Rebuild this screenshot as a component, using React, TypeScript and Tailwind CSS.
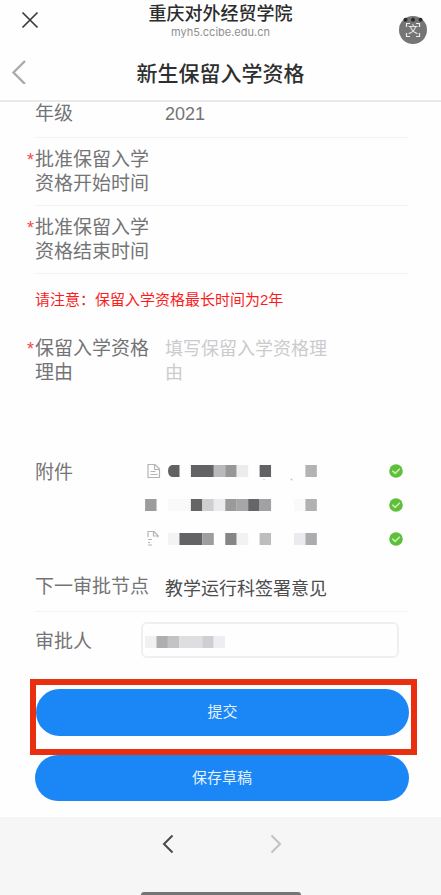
import { ReactNode } from "react";

interface ICell {
  at: number;
  span?: number;
  color: string;
}

interface IFileItem {
  name: string;
  icon: "full" | "partial" | "none";
  cells: ICell[];
}

interface IRowProps {
  label: ReactNode;
  htmlFor?: string;
  required?: boolean;
  className?: string;
  children?: ReactNode;
}

const CELL = 11.45;

const files: IFileItem[] = [
  {
    name: "file-1",
    icon: "full",
    cells: [
      { at: 2, span: 2, color: "#626264" },
      { at: 4, color: "#b9b9bb" },
      { at: 5, color: "#979797" },
      { at: 6, color: "#ececec" },
      { at: 8, color: "#626264" },
      { at: 12, color: "#b3b3b3" },
    ],
  },
  {
    name: "file-2",
    icon: "none",
    cells: [
      { at: -2, color: "#9c9c9c" },
      { at: 0, span: 2, color: "#f9f9f9" },
      { at: 2, color: "#656565" },
      { at: 3, color: "#cfcfd1" },
      { at: 4, color: "#ebebed" },
      { at: 5, color: "#9a9a9a" },
      { at: 6, color: "#a6a6a8" },
      { at: 7, color: "#666668" },
      { at: 8, color: "#a1a1a3" },
      { at: 11, color: "#f9f9f9" },
      { at: 12, color: "#b1b1b1" },
    ],
  },
  {
    name: "file-3",
    icon: "partial",
    cells: [
      { at: 0, color: "#f3f3f3" },
      { at: 1, span: 2, color: "#636365" },
      { at: 3, color: "#9d9d9f" },
      { at: 5, color: "#868686" },
      { at: 6, color: "#f2f2f2" },
      { at: 8, color: "#bdbdbd" },
      { at: 11, color: "#ebebef" },
      { at: 12, color: "#acacae" },
    ],
  },
];

const approverCells: ICell[] = [
  { at: 0, color: "#f1f1f3" },
  { at: 1, color: "#aeaeb0" },
  { at: 2, color: "#c3c3c5" },
  { at: 3, span: 2, color: "#dedee0" },
  { at: 5, color: "#cfcfd3" },
  { at: 6, color: "#eeeef2" },
];

const Cells = ({ cells, left }: { cells: ICell[]; left: number }) => (
  <>
    {cells.map((cell) => (
      <rect
        key={cell.at}
        x={left + cell.at * CELL}
        y="0"
        width={(cell.span ?? 1) * CELL}
        height="12"
        fill={cell.color}
      />
    ))}
  </>
);

const FileIcon = ({ partial }: { partial: boolean }) => (
  <g fill="none" stroke="#b4b4b6" strokeWidth="1.2">
    {partial ? (
      <path d="M4 4V-1.500H10l4 4v2M9.500-1v4h4M4 6.500h4M4 9.500h2M4 12h4" />
    ) : (
      <path d="M4-.5h7l4.500 4.500v8.500H4zM10.500-.5v5h5M6.500 6.500h5M6.500 9.500h7" />
    )}
  </g>
);

const CheckIcon = () => (
  <svg className="size-3.5" viewBox="0 0 14 14" fill="none">
    <circle cx="7" cy="7" r="6.8" fill="#5fbf3c" />
    <path
      d="M3.8 7.2l2.3 2.2 4.3-4.2"
      stroke="#c4f0a8"
      strokeWidth="1.6"
      strokeLinecap="round"
      strokeLinejoin="round"
    />
  </svg>
);

const Row = ({ label, htmlFor, required, className, children }: IRowProps) => (
  <div className={`flex pt-2.5 ${className ?? ""}`}>
    <label
      htmlFor={htmlFor}
      className="relative w-[130px] shrink-0 text-[19px] leading-6 text-[#747476]"
    >
      {required && (
        <span className="absolute -left-2 top-0 text-lg leading-6 text-[#f4494a]">
          *
        </span>
      )}
      {label}
    </label>
    {children}
  </div>
);

const App = () => {
  return (
    <div className="flex min-h-screen flex-col bg-[#fefefe] font-['Liberation_Sans','Noto_Sans_CJK_SC',sans-serif]">
      <header className="border-b-2 border-[#e9e9eb]">
        <div className="relative flex h-11 flex-col items-center pt-0.5">
          <button
            type="button"
            aria-label="关闭"
            className="absolute left-5 top-2.5 flex size-5 items-center justify-center"
          >
            <svg className="size-5" viewBox="0 0 20 20" fill="none">
              <path
                d="M2.500 2.500l15 15M17.500 2.500l-15 15"
                stroke="#3c3c3c"
                strokeWidth="1.7"
              />
            </svg>
          </button>
          <p className="text-lg leading-6 font-medium text-[#2c2c2c]">
            重庆对外经贸学院
          </p>
          <p className="font-['Inter'] text-[11px] leading-3 text-[#8f8f8f]">
            myh5.ccibe.edu.cn
          </p>
          <button
            type="button"
            aria-label="翻译"
            className="absolute right-3.5 top-4 flex size-7 items-center justify-center rounded-full bg-[#757575]"
          >
            <svg
              className="absolute inset-0 size-7"
              viewBox="0 0 28 28"
              fill="none"
            >
              <g fill="#2b2b2b">
                <circle cx="6.5" cy="3.7" r="2" />
                <circle cx="14" cy="3.7" r="2" />
                <circle cx="21.5" cy="3.7" r="2" />
              </g>
              <path
                d="M7.5 11V7.5H11M17 7.5h3.5V11M20.5 17v3.5H17M11 20.5H7.5V17"
                stroke="#ededed"
                strokeWidth="1.2"
              />
            </svg>
            <span className="text-[10px] leading-3 text-[#f4f4f4]">文</span>
          </button>
        </div>
        <div className="relative flex h-14 items-center justify-center pt-1">
          <button
            type="button"
            aria-label="返回"
            className="absolute left-2 top-4 flex h-6 w-5 items-center justify-center"
          >
            <svg className="h-6 w-5" viewBox="0 0 20 24" fill="none">
              <path
                d="M17 1L5.5 12.5 17 24"
                stroke="#ababad"
                strokeWidth="2.4"
              />
            </svg>
          </button>
          <h1 className="text-[21px] leading-6 font-medium text-[#2f2f2f]">
            新生保留入学资格
          </h1>
        </div>
      </header>

      <form onSubmit={(e) => e.preventDefault()}>
        <div className="pl-[35px] pr-8">
          <div className="flex border-b border-[#f3f3f5] pt-0.5 pb-[13px] text-[#747476]">
            <p className="w-[130px] text-[19px] leading-5">年级</p>
            <p className="text-lg leading-5">2021</p>
          </div>
          <Row
            required
            htmlFor="start"
            className="border-b border-[#f3f3f5] pb-[9px]"
            label={
              <>
                批准保留入学
                <br />
                资格开始时间
              </>
            }
          >
            <input
              id="start"
              className="min-w-0 flex-1 bg-transparent text-lg focus:outline-none"
            />
          </Row>
          <Row
            required
            htmlFor="end"
            className="border-b border-[#f3f3f5] pb-[9px]"
            label={
              <>
                批准保留入学
                <br />
                资格结束时间
              </>
            }
          >
            <input
              id="end"
              className="min-w-0 flex-1 bg-transparent text-lg focus:outline-none"
            />
          </Row>
          <p className="pt-4 pb-[17px] text-[15px] leading-5 text-[#fb1d1d]">
            请注意：保留入学资格最长时间为2年
          </p>
          <Row
            required
            htmlFor="reason"
            label={
              <>
                保留入学资格
                <br />
                理由
              </>
            }
          >
            <textarea
              id="reason"
              placeholder="填写保留入学资格理由"
              className="block h-28 w-44 resize-none text-lg leading-6 placeholder:text-[#cbcbcd] focus:outline-none"
            />
          </Row>
          <div className="flex pt-2.5 pb-3.5">
            <p className="w-[109px] pt-0.5 text-[19px] leading-6 text-[#747476]">
              附件
            </p>
            <ul className="flex flex-1 flex-col gap-2.5 pr-1.5">
              {files.map((file) => (
                <li
                  key={file.name}
                  className="flex h-6 items-center justify-between"
                >
                  <svg
                    className="h-3 w-44 overflow-visible"
                    viewBox="0 0 176 12"
                  >
                    {file.icon !== "none" && (
                      <FileIcon partial={file.icon === "partial"} />
                    )}
                    {file.icon === "full" && (
                      <path d="M35.5 0H28q-4 1-4 6t4 6h7.5z" fill="#626264" />
                    )}
                    <Cells cells={file.cells} left={24} />
                    {file.icon === "full" && (
                      <g fill="#c4c4c4">
                        <circle cx="120" cy="14.5" r="0.7" />
                        <circle cx="147.5" cy="14.5" r="1" />
                      </g>
                    )}
                  </svg>
                  <CheckIcon />
                </li>
              ))}
            </ul>
          </div>
          <div className="flex border-b border-[#f3f3f5] pt-2.5 pb-2.5">
            <p className="w-[130px] text-[19px] leading-6 text-[#747476]">
              下一审批节点
            </p>
            <p className="pt-0.5 text-lg leading-6 text-[#4c4c4e]">
              教学运行科签署意见
            </p>
          </div>
          <div className="flex items-center pt-2.5">
            <label
              htmlFor="approver"
              className="w-[106px] pt-1 text-[19px] leading-6 text-[#747476]"
            >
              审批人
            </label>
            <div className="relative mr-2.5 flex-1">
              <select
                id="approver"
                className="block h-9 w-full appearance-none rounded-md border-2 border-[#efeff1] bg-transparent focus:outline-none"
              />
              <svg
                className="pointer-events-none absolute left-1 top-3.5 h-3 w-20"
                viewBox="0 0 80 12"
              >
                <Cells cells={approverCells} left={0} />
              </svg>
            </div>
          </div>
        </div>

        <div className="mt-[21px] mr-6 ml-[30px] border-6 border-[#ea2e10] pt-1 pr-0.5 pb-[13px]">
          <button
            type="submit"
            className="block h-[47px] w-full rounded-full bg-[#1b87f7] text-[15px] text-[#e6f2ff]"
          >
            提交
          </button>
        </div>
        <div className="pr-8 pb-4 pl-[35px]">
          <button
            type="button"
            className="block h-[46px] w-full rounded-full bg-[#1b87f7] text-[15px] text-[#e6f2ff]"
          >
            保存草稿
          </button>
        </div>
      </form>

      <footer className="flex flex-1 flex-col items-center justify-between bg-[#f6f6f6] pt-4">
        <nav className="flex gap-[86px] pl-0.5">
          <button type="button" aria-label="后退">
            <svg className="size-[22px]" viewBox="0 0 22 22" fill="none">
              <path
                d="M15.5 2.5L7 11l8.5 8.5"
                stroke="#4a4a4a"
                strokeWidth="2"
              />
            </svg>
          </button>
          <button type="button" aria-label="前进" disabled>
            <svg className="size-[22px]" viewBox="0 0 22 22" fill="none">
              <path
                d="M6.5 2.5L15 11l-8.5 8.5"
                stroke="#c2c2c2"
                strokeWidth="2"
              />
            </svg>
          </button>
        </nav>
        <div className="h-[3px] w-40 rounded-t-sm bg-[#757575]" />
      </footer>
    </div>
  );
};

export default App;
